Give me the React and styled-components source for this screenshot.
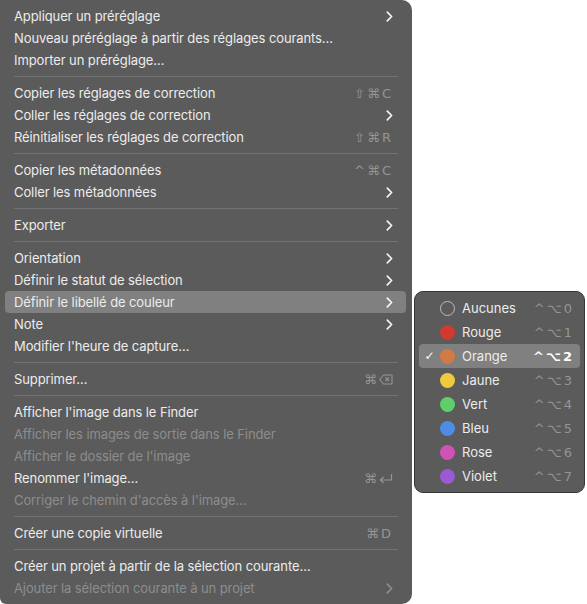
import React from "react";
import styled, { createGlobalStyle } from "styled-components";

const GlobalStyle = createGlobalStyle`
  html, body {
    margin: 0;
    padding: 0;
    background: #ffffff;
  }
  body {
    font-family: Inter, "Noto Sans", "Liberation Sans", "DejaVu Sans", sans-serif;
    -webkit-font-smoothing: antialiased;
  }
`;

const Stage = styled.div`
  display: flex;
  align-items: flex-start;
  width: 587px;
  height: 604px;
  overflow: hidden;
`;

const Menu = styled.div`
  box-sizing: border-box;
  width: 412px;
  height: 604px;
  padding: 5px 6px 5px 5px;
  background: #5b5b5b;
  border-radius: 0 10px 10px 6px;
  display: flex;
  flex-direction: column;
  flex-shrink: 0;
`;

const Row = styled.div`
  height: 22px;
  display: flex;
  align-items: center;
  padding: 0 13px 0 9px;
  border-radius: 4px;
  font-size: 13px;
  letter-spacing: -0.1px;
  color: ${(p) => (p.disabled ? "#8d8d8d" : "#ececec")};
  background: ${(p) => (p.active ? "#808080" : "transparent")};
`;

const Label = styled.span`
  flex: 1;
  white-space: nowrap;
`;

const Shortcut = styled.span`
  color: ${(p) => (p.bright ? "#ffffff" : "#959595")};
  font-weight: ${(p) => (p.bright ? 600 : 400)};
  font-family: "DejaVu Sans", Inter, sans-serif;
  font-size: 13px;
  letter-spacing: 2px;
  white-space: nowrap;
  display: flex;
  align-items: center;
`;

const Separator = styled.div`
  height: 1px;
  margin: 5px 8px 5px 9px;
  background: #727272;
`;

const Submenu = styled.div`
  box-sizing: border-box;
  margin: 291px 0 0 2px;
  width: 171px;
  padding: 4px;
  background: #5b5b5b;
  border: 1px solid #363636;
  border-radius: 9px;
  display: flex;
  flex-direction: column;
`;

const ColorRow = styled.div`
  height: 24px;
  display: flex;
  align-items: center;
  padding: 0 6px 0 0;
  border-radius: 4px;
  font-size: 13px;
  color: #ececec;
  background: ${(p) => (p.active ? "#808080" : "transparent")};
`;

const Check = styled.span`
  width: 21px;
  display: flex;
  justify-content: center;
  font-size: 12px;
  color: #ffffff;
  font-family: "DejaVu Sans", sans-serif;
`;

const Dot = styled.span`
  box-sizing: border-box;
  width: 15px;
  height: 15px;
  border-radius: 50%;
  flex-shrink: 0;
  margin-right: 7px;
  background: ${(p) => p.color || "transparent"};
  border: ${(p) => (p.color ? "none" : "1.5px solid #bdbdbd")};
`;

const Chevron = ({ dim }) => (
  <svg width="7" height="11" viewBox="0 0 7 11">
    <path
      d="M1.3 1.2 L5.6 5.5 L1.3 9.8"
      fill="none"
      stroke={dim ? "#8d8d8d" : "#f4f4f4"}
      strokeWidth="1.7"
      strokeLinecap="round"
      strokeLinejoin="round"
    />
  </svg>
);

const DeleteKey = () => (
  <svg width="14" height="11" viewBox="0 0 14 11">
    <path
      d="M4.5 1 H12.5 Q13 1 13 1.5 V9.5 Q13 10 12.5 10 H4.5 L0.8 5.5 Z"
      fill="none"
      stroke="#959595"
      strokeWidth="1.1"
      strokeLinejoin="round"
    />
    <path d="M6.5 3.5 L10 7 M10 3.5 L6.5 7" stroke="#959595" strokeWidth="1.1" />
  </svg>
);

const ReturnKey = () => (
  <svg width="14" height="11" viewBox="0 0 14 11">
    <path
      d="M12.5 1 V7 H1.5 M4.5 4 L1.5 7 L4.5 10"
      fill="none"
      stroke="#959595"
      strokeWidth="1.2"
      strokeLinejoin="round"
    />
  </svg>
);

const groups = [
  [
    { label: "Appliquer un préréglage", sub: true },
    { label: "Nouveau préréglage à partir des réglages courants…" },
    { label: "Importer un préréglage…" },
  ],
  [
    { label: "Copier les réglages de correction", keys: "⇧⌘C" },
    { label: "Coller les réglages de correction", sub: true },
    { label: "Réinitialiser les réglages de correction", keys: "⇧⌘R" },
  ],
  [
    { label: "Copier les métadonnées", keys: "^⌘C" },
    { label: "Coller les métadonnées", sub: true },
  ],
  [{ label: "Exporter", sub: true }],
  [
    { label: "Orientation", sub: true },
    { label: "Définir le statut de sélection", sub: true },
    { label: "Définir le libellé de couleur", sub: true, active: true },
    { label: "Note", sub: true },
    { label: "Modifier l'heure de capture…" },
  ],
  [{ label: "Supprimer…", keys: "⌘", icon: "delete" }],
  [
    { label: "Afficher l'image dans le Finder" },
    { label: "Afficher les images de sortie dans le Finder", disabled: true },
    { label: "Afficher le dossier de l'image", disabled: true },
    { label: "Renommer l'image…", keys: "⌘", icon: "return" },
    { label: "Corriger le chemin d'accès à l'image…", disabled: true },
  ],
  [{ label: "Créer une copie virtuelle", keys: "⌘D" }],
  [
    { label: "Créer un projet à partir de la sélection courante…" },
    { label: "Ajouter la sélection courante à un projet", sub: true, disabled: true },
  ],
];

const colors = [
  { name: "Aucunes", color: null, key: "0" },
  { name: "Rouge", color: "#d2392f", key: "1" },
  { name: "Orange", color: "#d27a43", key: "2", active: true },
  { name: "Jaune", color: "#efca3f", key: "3" },
  { name: "Vert", color: "#5ecf6b", key: "4" },
  { name: "Bleu", color: "#4e8de7", key: "5" },
  { name: "Rose", color: "#cf53b6", key: "6" },
  { name: "Violet", color: "#9a59d5", key: "7" },
];

export default function App() {
  return (
    <>
      <GlobalStyle />
      <Stage>
        <Menu>
          {groups.map((group, gi) => (
            <React.Fragment key={gi}>
              {gi > 0 && <Separator />}
              {group.map((item) => (
                <Row key={item.label} disabled={item.disabled} active={item.active}>
                  <Label>{item.label}</Label>
                  {item.keys && (
                    <Shortcut>
                      {item.keys}
                      {item.icon === "delete" && <DeleteKey />}
                      {item.icon === "return" && <ReturnKey />}
                    </Shortcut>
                  )}
                  {item.sub && <Chevron dim={item.disabled} />}
                </Row>
              ))}
            </React.Fragment>
          ))}
        </Menu>
        <Submenu>
          {colors.map((c) => (
            <ColorRow key={c.name} active={c.active}>
              <Check>{c.active ? "✓" : ""}</Check>
              <Dot color={c.color} />
              <Label>{c.name}</Label>
              <Shortcut bright={c.active}>^⌥{c.key}</Shortcut>
            </ColorRow>
          ))}
        </Submenu>
      </Stage>
    </>
  );
}
